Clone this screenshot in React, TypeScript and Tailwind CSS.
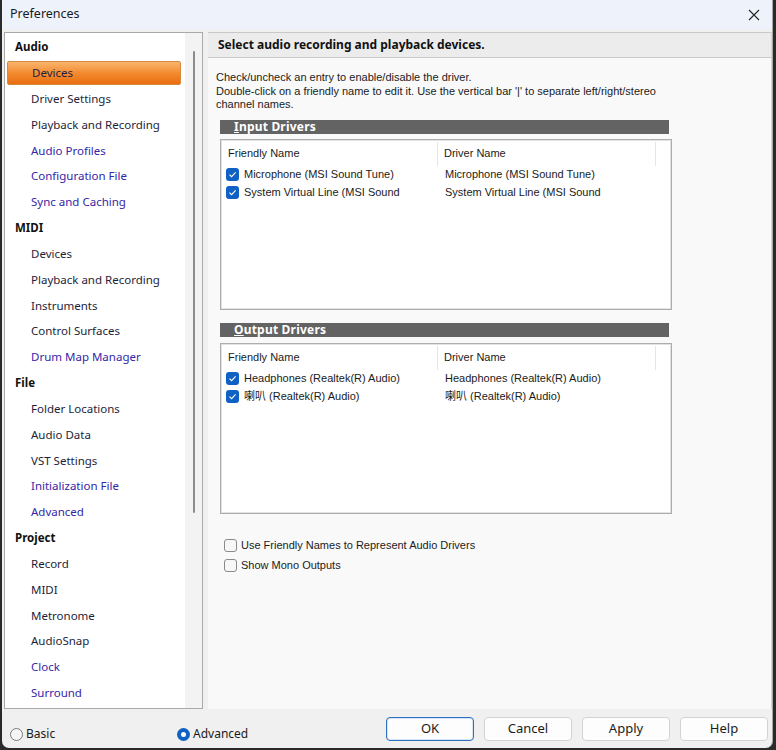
import React from 'react';

type TreeRow = { label: string; kind: 'head' | 'item' | 'link'; selected?: boolean };

const tree: TreeRow[] = [
  { label: 'Audio', kind: 'head' },
  { label: 'Devices', kind: 'item', selected: true },
  { label: 'Driver Settings', kind: 'item' },
  { label: 'Playback and Recording', kind: 'item' },
  { label: 'Audio Profiles', kind: 'link' },
  { label: 'Configuration File', kind: 'link' },
  { label: 'Sync and Caching', kind: 'link' },
  { label: 'MIDI', kind: 'head' },
  { label: 'Devices', kind: 'item' },
  { label: 'Playback and Recording', kind: 'item' },
  { label: 'Instruments', kind: 'item' },
  { label: 'Control Surfaces', kind: 'item' },
  { label: 'Drum Map Manager', kind: 'link' },
  { label: 'File', kind: 'head' },
  { label: 'Folder Locations', kind: 'item' },
  { label: 'Audio Data', kind: 'item' },
  { label: 'VST Settings', kind: 'item' },
  { label: 'Initialization File', kind: 'link' },
  { label: 'Advanced', kind: 'link' },
  { label: 'Project', kind: 'head' },
  { label: 'Record', kind: 'item' },
  { label: 'MIDI', kind: 'item' },
  { label: 'Metronome', kind: 'item' },
  { label: 'AudioSnap', kind: 'item' },
  { label: 'Clock', kind: 'link' },
  { label: 'Surround', kind: 'link' },
];

const ui = { fontFamily: '"Noto Sans", "Noto Sans CJK SC", sans-serif' };
const ms = { fontFamily: '"Liberation Sans", "Noto Sans CJK SC", sans-serif' };

function Check({ on }: { on: boolean }) {
  if (on) {
    return (
      <span className="w-[13px] h-[13px] rounded-[3px] bg-[#0f62c4] flex items-center justify-center shrink-0">
        <svg width="9" height="9" viewBox="0 0 9 9">
          <path d="M1.5 4.6 L3.6 6.7 L7.6 2.3" fill="none" stroke="#fff" strokeWidth="1.1" />
        </svg>
      </span>
    );
  }
  return <span className="w-[13px] h-[13px] rounded-[3px] border border-[#8a8a8a] bg-[#f7f7f7] shrink-0" />;
}

function Radio({ on }: { on: boolean }) {
  if (on) {
    return (
      <span className="w-[13px] h-[13px] rounded-full bg-[#0f62c4] flex items-center justify-center shrink-0">
        <span className="w-[5px] h-[5px] rounded-full bg-white" />
      </span>
    );
  }
  return <span className="w-[13px] h-[13px] rounded-full border border-[#7a7a7a] bg-[#f5f5f5] shrink-0" />;
}

function SectionBar({ label }: { label: string }) {
  return (
    <div className="w-[449px] h-[14px] bg-[#636363] flex items-center pl-[14px]">
      <span className="text-white text-[12px] font-bold leading-none tracking-[0.2px]" style={ui}>
        <span className="underline underline-offset-[1px]">{label[0]}</span>
        {label.slice(1)}
      </span>
    </div>
  );
}

function DriverList({ rows }: { rows: string[] }) {
  return (
    <div className="w-[452px] h-[171px] bg-white border border-[#adadad] shadow-[inset_0_0_0_1px_#e3e3e3]" style={ms}>
      <div className="flex h-[26px] items-start text-[11px] text-[#1b1b1b] pt-[2px]">
        <div className="w-[217px] pl-[7px] h-[24px] flex items-center border-r border-[#e5e5e5]">Friendly Name</div>
        <div className="w-[218px] pl-[6px] h-[24px] flex items-center border-r border-[#e5e5e5]">Driver Name</div>
      </div>
      {rows.map((r) => (
        <div key={r} className="flex h-[18px] items-center text-[11px] text-[#1b1b1b]">
          <div className="w-[217px] pl-[5px] flex items-center gap-[5px]">
            <Check on />
            <span>{r}</span>
          </div>
          <div className="pl-[7px]">{r}</div>
        </div>
      ))}
    </div>
  );
}

function Button({ label, focus }: { label: string; focus?: boolean }) {
  return (
    <button
      className={
        'w-[88px] h-[24px] rounded-[4px] bg-[#fdfdfd] text-[13px] text-[#1b1b1b] flex items-center justify-center ' +
        (focus ? 'border border-[#2e6fbf] shadow-[inset_0_0_0_1px_#d6e4f5]' : 'border border-[#d3d3d3]')
      }
      style={ui}
    >
      {label}
    </button>
  );
}

export default function App() {
  return (
    <div className="w-[776px] h-[750px] bg-[#2a2a2a] flex pl-[2px]">
      <div className="w-[771px] h-[748px] bg-[#f0f0f0] rounded-b-[7px] flex flex-col overflow-hidden border-r border-[#a8a8a8]">
        {/* title bar */}
        <div className="h-[29px] bg-[#eef2fa] flex items-center justify-between pl-[8px] pr-[12px] shrink-0">
          <span className="text-[12.5px] text-[#1a1a1a]" style={ui}>Preferences</span>
          <svg width="12" height="12" viewBox="0 0 12 12">
            <path d="M1 1 L11 11 M11 1 L1 11" stroke="#222" strokeWidth="1.1" />
          </svg>
        </div>

        {/* body */}
        <div className="flex pt-[3px] pl-[2px] gap-[5px] h-[680px] shrink-0">
          {/* tree */}
          <div className="w-[199px] h-[677px] bg-white border border-[#a9a9a9] flex overflow-hidden">
            <div className="w-[180px] pt-[1px]" style={ui}>
              {tree.map((t, i) => (
                <div key={i} className="h-[25.84px] flex items-center">
                  {t.kind === 'head' ? (
                    <span className="pl-[10px] text-[11.5px] font-bold text-[#111]">{t.label}</span>
                  ) : t.selected ? (
                    <div className="ml-[2px] w-[174px] h-[24px] rounded-[2px] border border-[#d88a3c] bg-gradient-to-b from-[#f9b46c] via-[#f28c2e] to-[#ea6c0e] flex items-center pl-[24px]">
                      <span className="text-[11.5px] text-[#1e1e4a]">{t.label}</span>
                    </div>
                  ) : (
                    <span
                      className={
                        'pl-[26px] text-[11.5px] ' + (t.kind === 'link' ? 'text-[#3526a8]' : 'text-[#1e1e38]')
                      }
                    >
                      {t.label}
                    </span>
                  )}
                </div>
              ))}
            </div>
            <div className="flex-1 bg-[#f3f3f3] flex justify-center pt-[18px]">
              <div className="w-[2px] h-[462px] bg-[#8c8c8c] rounded-full" />
            </div>
          </div>

          {/* right panel */}
          <div className="flex-1 h-[677px] flex flex-col border-r border-[#d6d6d6]">
            <div className="h-[26px] bg-[#ececec] border-t border-b border-[#c9c9c9] flex items-center pl-[10px] shrink-0">
              <span className="text-[12px] font-bold text-[#111]" style={ui}>
                Select audio recording and playback devices.
              </span>
            </div>
            <div className="flex-1 bg-[#f9f9f9] pl-[8px] pt-[13px]">
              <div className="text-[11px] leading-[13.5px] text-[#1b1b1b]" style={ms}>
                <p>Check/uncheck an entry to enable/disable the driver.</p>
                <p>
                  Double-click on a friendly name to edit it. Use the vertical bar '|' to separate left/right/stereo
                  <br />
                  channel names.
                </p>
              </div>
              <div className="pl-[4px] pt-[8px] flex flex-col">
                <SectionBar label="Input Drivers" />
                <div className="h-[5px]" />
                <DriverList rows={['Microphone (MSI Sound Tune)', 'System Virtual Line (MSI Sound']} />
                <div className="h-[13px]" />
                <SectionBar label="Output Drivers" />
                <div className="h-[6px]" />
                <DriverList rows={['Headphones (Realtek(R) Audio)', '喇叭 (Realtek(R) Audio)']} />
                <div className="h-[25px]" />
                <div className="flex flex-col gap-[7px] pl-[4px] text-[11px] leading-[13px] text-[#1b1b1b]" style={ms}>
                  <label className="flex items-center gap-[4px] h-[13px]">
                    <Check on={false} />
                    <span>Use Friendly Names to Represent Audio Drivers</span>
                  </label>
                  <label className="flex items-center gap-[4px] h-[13px]">
                    <Check on={false} />
                    <span>Show Mono Outputs</span>
                  </label>
                </div>
              </div>
            </div>
          </div>
        </div>

        {/* footer */}
        <div className="flex-1 flex items-start pl-[8px] pr-[4px] pt-[8px]">
          <label className="flex items-center gap-[3px] w-[167px] text-[12px] text-[#1b1b1b] mt-[8px]" style={ui}>
            <Radio on={false} />
            <span>Basic</span>
          </label>
          <label className="flex items-center gap-[3px] text-[12px] text-[#1b1b1b] mt-[8px]" style={ui}>
            <Radio on />
            <span>Advanced</span>
          </label>
          <div className="ml-auto flex gap-[10px]">
            <Button label="OK" focus />
            <Button label="Cancel" />
            <Button label="Apply" />
            <Button label="Help" />
          </div>
        </div>
      </div>
    </div>
  );
}
